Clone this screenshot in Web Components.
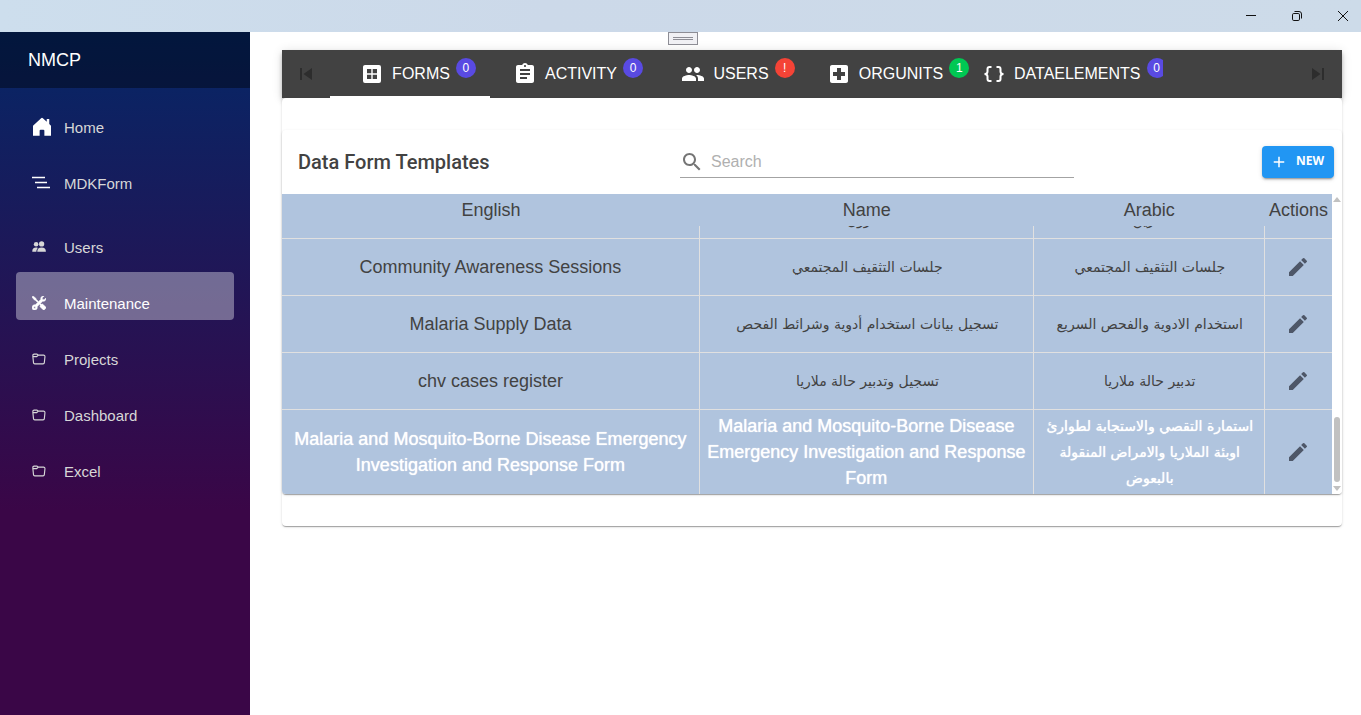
<!DOCTYPE html>
<html lang="en">
<head>
<meta charset="utf-8">
<title>NMCP</title>
<style>
html,body{margin:0;height:100%}
body{font-family:"Liberation Sans",Arial,sans-serif;background:#fff;color:#424242}
</style>
</head>
<body>
<nmcp-app></nmcp-app>
<script>
const define = (name, html, init) => customElements.define(name, class extends HTMLElement {
  connectedCallback() {
    if (this.shadowRoot) return;
    const t = document.createElement('template');
    t.innerHTML = typeof html === 'function' ? html(this) : html;
    this.attachShadow({mode: 'open'}).append(t.content.cloneNode(true));
    if (init) init(this);
  }
});

const icons = {
  home: ['0 0 16 16', '<path d="M8.700.9a1 1 0 0 0-1.400 0L.8 7v8h5.300V10.900a.8.8 0 0 1 .8-.8h2.200a.8.8 0 0 1 .8.8V15h5.300V7L13.800 5.600V1.600h-2v2.200z"/>'],
  lines: ['0 0 20 20', '<path d="M0 4.500h13M3 9.500h12M5 14.500h13" fill="none" stroke="currentColor" stroke-width="1.300"/>'],
  people: ['0 0 16 16', '<circle cx="4.700" cy="4.800" r="2.600"/><circle cx="11" cy="4.500" r="3"/><path d="M.3 13.400C.2 10.400 1.800 8.700 4.700 8.700c.8 0 1.400.1 2 .4C5.500 10.200 5 11.600 5 13.400zM6 13.400C6 10.400 7.700 8.700 11 8.700s4.900 1.700 4.900 4.700z"/>'],
  tools: ['0 0 16 16', '<path stroke="currentColor" stroke-width=".6" d="M1 0 0 1l2.200 3.081a1 1 0 0 0 .815.419h.07a1 1 0 0 1 .708.293l2.675 2.675-2.617 2.654A3.003 3.003 0 0 0 0 13a3 3 0 1 0 5.878-.851l2.654-2.617.968.968-.305.914a1 1 0 0 0 .242 1.023l3.270 3.270a.997.997 0 0 0 1.414 0l1.586-1.586a.997.997 0 0 0 0-1.414l-3.270-3.270a1 1 0 0 0-1.023-.242L10.500 9.500l-.960-.960 2.680-2.643A3.005 3.005 0 0 0 16 3q0-.405-.102-.777l-2.140 2.141L12 4l-.364-1.757L13.777.102a3 3 0 0 0-3.675 3.680L7.462 6.460 4.793 3.793a1 1 0 0 1-.293-.707v-.071a1 1 0 0 0-.419-.814zM3 12a1 1 0 1 1 0 2 1 1 0 0 1 0-2"/>'],
  folder: ['0 0 16 16', '<path d="M1 5.300V3.800A1.400 1.400 0 0 1 2.400 2.400h3.200c.8 0 1.100 1.200 2 1.200h5.600a1.600 1.600 0 0 1 1.600 1.800l-.7 6.700a1.500 1.500 0 0 1-1.500 1.400H3.200a1.500 1.500 0 0 1-1.500-1.400L1 5.300h4.300L7 3.700" fill="none" stroke="currentColor" stroke-width="1.300"/>'],
  skipprev: ['0 0 24 24', '<path d="M6 6h2v12H6zm3.500 6 8.500 6V6z"/>'],
  skipnext: ['0 0 24 24', '<path d="m6 18 8.500-6L6 6zM16 6v12h2V6z"/>'],
  forms: ['0 0 24 24', '<path fill-rule="evenodd" d="M5 3h14a2 2 0 0 1 2 2v14a2 2 0 0 1-2 2H5a2 2 0 0 1-2-2V5c0-1.100.9-2 2-2zm2 4v4.300h4.300V7zm5.700 0v4.300H17V7zM7 12.700V17h4.300v-4.300zm5.700 0V17H17v-4.300z"/>'],
  activity: ['0 0 24 24', '<path d="M19 3h-4.180C14.400 1.840 13.300 1 12 1s-2.400.840-2.820 2H5c-1.100 0-2 .9-2 2v14c0 1.100.9 2 2 2h14c1.100 0 2-.9 2-2V5c0-1.100-.9-2-2-2m-7 0c.55 0 1 .45 1 1s-.45 1-1 1-1-.45-1-1 .45-1 1-1m2 14H7v-2h7zm3-4H7v-2h10zm0-4H7V7h10z"/>'],
  group: ['0 0 24 24', '<path d="M16 11c1.660 0 2.990-1.340 2.990-3S17.660 5 16 5s-3 1.340-3 3 1.340 3 3 3m-8 0c1.660 0 2.990-1.340 2.990-3S9.660 5 8 5 5 6.340 5 8s1.340 3 3 3m0 2c-2.330 0-7 1.170-7 3.500V19h14v-2.500c0-2.330-4.670-3.500-7-3.500m8 0c-.29 0-.62.020-.97.050 1.160.840 1.970 1.970 1.970 3.450V19h6v-2.500c0-2.330-4.670-3.500-7-3.500"/>'],
  orgunits: ['0 0 24 24', '<path d="M19 3H5c-1.100 0-1.990.9-1.990 2L3 19c0 1.100.9 2 2 2h14c1.100 0 2-.9 2-2V5c0-1.100-.9-2-2-2m-1 11h-4v4h-4v-4H6v-4h4V6h4v4h4z"/>'],
  data: ['0 0 24 24', '<path d="M9.500 5H7.500Q5.500 5 5.500 7v2.500Q5.500 12 2.500 12 5.500 12 5.500 14.500V17q0 2 2 2h2M14.500 5h2q2 0 2 2v2.500q0 2.500 3 2.500-3 0-3 2.500V17q0 2-2 2h-2" fill="none" stroke="currentColor" stroke-width="2"/>'],
  search: ['0 0 24 24', '<path d="M15.500 14h-.79l-.28-.27C15.410 12.590 16 11.110 16 9.500 16 5.910 13.090 3 9.500 3S3 5.910 3 9.500 5.910 16 9.500 16c1.610 0 3.090-.59 4.230-1.570l.27.28v.79l5 4.990L20.490 19zm-6 0C7.010 14 5 11.990 5 9.500S7.010 5 9.500 5 14 7.010 14 9.500 11.990 14 9.500 14"/>'],
  add: ['0 0 24 24', '<path d="M19 13h-6v6h-2v-6H5v-2h6V5h2v6h6z"/>'],
  edit: ['0 0 24 24', '<path d="M3 17.250V21h3.750L17.810 9.940l-3.750-3.750zM20.710 7.040c.39-.39.39-1.020 0-1.410l-2.340-2.340a.996.996 0 0 0-1.410 0l-1.830 1.830 3.750 3.750z"/>'],
  minimize: ['0 0 16 16', '<path d="M3 7.500h10" stroke="currentColor"/>'],
  restore: ['0 0 16 16', '<g fill="none" stroke="currentColor"><rect x="3.500" y="5.500" width="7" height="7" rx="1.300"/><path d="M5.500 3.500H10A2.500 2.500 0 0 1 12.500 6v4.500"/></g>'],
  close: ['0 0 16 16', '<path d="m3 3 10 10M13 3 3 13" stroke="currentColor"/>']
};
define('x-icon', el => {
  const [box, body] = icons[el.getAttribute('name')];
  return `<style>:host{display:block;flex:none;width:24px;height:24px}svg{display:block;width:100%;height:100%}</style>
  <svg viewBox="${box}" fill="currentColor" aria-hidden="true">${body}</svg>`;
});

define('title-bar', `<style>
:host{display:flex;justify-content:flex-end;align-items:center;gap:30px;height:32px;padding-right:10px;box-sizing:border-box;background:linear-gradient(90deg,#cddeed,#ccd9e9 40%,#cddbe9);color:#111}
button{border:0;padding:0;background:none;color:inherit}
x-icon{width:16px;height:16px}
</style>
<button aria-label="Minimize"><x-icon name="minimize"></x-icon></button>
<button aria-label="Restore"><x-icon name="restore"></x-icon></button>
<button aria-label="Close"><x-icon name="close"></x-icon></button>`);

define('nav-item', el => `<style>
:host{display:block}
a{display:flex;align-items:center;gap:16px;height:48px;padding:16px 16px 0 14px;box-sizing:border-box;border-radius:4px;color:#d7d7d7;text-decoration:none;font-size:15px;line-height:32px}
.icon{display:flex;justify-content:flex-start;width:18px}
x-icon{width:14px;height:14px;margin:0 0 2px 2px}
:host([wide]) x-icon{width:20px;height:20px;color:#fff}
:host([active]) a{background:rgba(255,255,255,.37);color:#fff}
</style>
<a href="#"><span class="icon"><x-icon name="${el.getAttribute('icon')}"></x-icon></span><slot></slot></a>`);

define('side-bar', `<style>
:host{display:block;flex:0 0 250px;background:linear-gradient(180deg,#052767 0%,#3a0647 70%)}
header{display:flex;align-items:center;height:56px;padding-left:28px;background:rgba(0,0,0,.4);color:#fff;font-size:18px}
nav{display:flex;flex-direction:column;gap:8px;padding:8px 16px}
.second{margin-top:8px}
</style>
<header>NMCP</header>
<nav>
<nav-item icon="home" wide>Home</nav-item>
<nav-item icon="lines" wide>MDKForm</nav-item>
<nav-item icon="people" class="second">Users</nav-item>
<nav-item icon="tools" active>Maintenance</nav-item>
<nav-item icon="folder">Projects</nav-item>
<nav-item icon="folder">Dashboard</nav-item>
<nav-item icon="folder">Excel</nav-item>
</nav>`);

define('tab-item', el => `<style>
:host{display:block;flex:none}
button{position:relative;display:flex;align-items:center;justify-content:center;min-width:160px;height:48px;padding:0 22px 0 12px;border:0;background:none;color:#fff;font:16px/24px "Liberation Sans",Arial,sans-serif;overflow:hidden}
:host([active]) button{box-shadow:inset 0 -2px #fff}
x-icon{margin-right:8px}
.label{position:relative}
.badge{position:absolute;left:calc(100% + 6px);top:-4px;width:20px;height:20px;border-radius:10px;background:${el.getAttribute('color')};font-size:12px;line-height:20px;text-align:center}
</style>
<button role="tab"><x-icon name="${el.getAttribute('icon')}"></x-icon><span class="label"><slot></slot><span class="badge">${el.getAttribute('badge')}</span></span></button>`);

define('tab-bar', `<style>
:host{display:flex;height:48px;background:#424242;box-shadow:0 2px 4px -1px rgba(0,0,0,.2),0 4px 5px rgba(0,0,0,.14),0 1px 10px rgba(0,0,0,.12)}
.tabs{display:flex;flex:1;min-width:0;overflow:hidden}
.scroll{display:flex;align-items:center;justify-content:center;flex:none;width:48px;padding:0;border:0;background:none;color:#2d2d2d}
</style>
<button class="scroll" aria-label="Previous tabs" disabled><x-icon name="skipprev"></x-icon></button>
<div class="tabs" role="tablist">
<tab-item icon="forms" badge="0" color="#594ae2" active>FORMS</tab-item>
<tab-item icon="activity" badge="0" color="#594ae2">ACTIVITY</tab-item>
<tab-item icon="group" badge="!" color="#f44336">USERS</tab-item>
<tab-item icon="orgunits" badge="1" color="#00c853">ORGUNITS</tab-item>
<tab-item icon="data" badge="0" color="#594ae2">DATAELEMENTS</tab-item>
</div>
<button class="scroll" aria-label="Next tabs" disabled><x-icon name="skipnext"></x-icon></button>`);

define('form-toolbar', `<style>
:host{display:grid;grid-template-columns:382fr 394fr 260fr;align-items:center;height:64px;padding:0 8px 0 16px}
h1{margin:0;font:500 20px/32px Roboto,sans-serif}
.search{display:flex;align-items:center;height:32px;box-sizing:border-box;border-bottom:1px solid #a3a3a3;color:#757575}
input{flex:1;min-width:0;margin-left:7px;padding:0;border:0;outline:0;background:none;color:#424242;font:16px "Liberation Sans",Arial,sans-serif}
input::placeholder{color:#b0b0b0;opacity:1}
.new{justify-self:end;display:flex;align-items:center;gap:8px;height:32px;padding:0 10px 2px 8px;border:0;border-radius:4px;background:#2196f3;color:#fff;font:700 12px/30px "Open Sans",sans-serif;box-shadow:0 3px 1px -2px rgba(0,0,0,.2),0 2px 2px rgba(0,0,0,.14),0 1px 5px rgba(0,0,0,.12)}
.new x-icon{width:18px;height:18px;margin-top:2px}
</style>
<h1>Data Form Templates</h1>
<label class="search"><x-icon name="search"></x-icon><input type="text" placeholder="Search" aria-label="Search"></label>
<button class="new"><x-icon name="add"></x-icon>NEW</button>`);

const rows = [
  ['', 'مخزون', 'تمرين'],
  ['Community Awareness Sessions', 'جلسات التثقيف المجتمعي', 'جلسات التثقيف المجتمعي'],
  ['Malaria Supply Data', 'تسجيل بيانات استخدام أدوية وشرائط الفحص', 'استخدام الادوية والفحص السريع'],
  ['chv cases register', 'تسجيل وتدبير حالة ملاريا', 'تدبير حالة ملاريا'],
  ['Malaria and Mosquito-Borne Disease Emergency Investigation and Response Form', 'Malaria and Mosquito-Borne Disease Emergency Investigation and Response Form', 'استمارة التقصي والاستجابة لطوارئ اوبئة الملاريا والامراض المنقولة بالبعوض']
];
const cell = t => /[\u0600-\u06ff]/.test(t) ? `<td lang="ar" dir="rtl">${t}</td>` : `<td>${t}</td>`;
define('form-table', `<style>
:host{display:flex;height:300px;border-radius:0 0 4px 4px;overflow:hidden}
.view{flex:1;min-width:0;overflow-y:auto;scrollbar-width:none;background:#b0c4de}
table{width:100%;table-layout:fixed;border-collapse:separate;border-spacing:0;font-size:18px;line-height:26px;text-align:center}
.c1{width:39.8%}.c2{width:31.8%}.c3{width:22%}
th{position:sticky;top:0;height:32px;padding:0;background:#b0c4de;font-weight:400;box-sizing:border-box;z-index:1}
td{height:57px;box-sizing:border-box;padding:3px 7px;border-top:1px solid #e0e0e0;border-right:1px solid #e0e0e0}
td:last-child{border-right:0;padding:3px 0}
td[lang=ar]{font-family:"DejaVu Sans",sans-serif;font-size:14px}
tbody tr:first-child td[lang=ar]{vertical-align:bottom;padding-bottom:5px}
tr.selected td{color:#fff;text-shadow:0 0 1px #fff}
td button{display:block;margin:0 auto;padding:0;border:0;background:none;color:#4e5768}
.bar{display:flex;flex-direction:column;align-items:center;width:10px;background:#fff}
.up,.down{width:0;border:4px solid transparent}
.up{border-top:0;border-bottom:5px solid #c1c1c1;margin-top:3px}
.down{border-bottom:0;border-top:5px solid #c1c1c1;margin:4px 0 3px}
.thumb{width:6px;height:65px;margin-top:auto;border-radius:3px;background:#c1c1c1}
</style>
<div class="view"><table>
<colgroup><col class="c1"><col class="c2"><col class="c3"><col></colgroup>
<thead><tr><th>English</th><th>Name</th><th>Arabic</th><th>Actions</th></tr></thead>
<tbody>${rows.map((r, i) => `<tr${i === 4 ? ' class="selected"' : ''}>${r.map(cell).join('')}<td><button aria-label="Edit"><x-icon name="edit"></x-icon></button></td></tr>`).join('')}</tbody>
</table></div>
<div class="bar"><i class="up"></i><i class="thumb"></i><i class="down"></i></div>`,
el => { const v = el.shadowRoot.querySelector('.view'); v.scrollTop = v.scrollHeight; });

define('tab-panel', `<style>
:host{display:block;padding:32px 0;border-radius:4px;background:#fff;box-shadow:0 2px 1px -1px rgba(0,0,0,.2),0 1px 1px rgba(0,0,0,.14),0 1px 3px rgba(0,0,0,.12)}
section{border-radius:4px;background:#fff;box-shadow:0 2px 1px -1px rgba(0,0,0,.2),0 1px 1px rgba(0,0,0,.14),0 1px 3px rgba(0,0,0,.12)}
</style>
<section><form-toolbar></form-toolbar><form-table></form-table></section>`);

define('nmcp-app', `<style>
:host{display:flex;flex-direction:column;min-height:100vh}
.body{position:relative;display:flex;flex:1}
main{flex:1;min-width:0;padding:18px 19px 18px 32px}
.handle{position:absolute;top:0;left:calc(50% - 13px);width:30px;height:13px;box-sizing:border-box;padding:4px;border:1px solid #8d8d95;background:#f0f0f4}
.handle i{display:block;height:3px;box-sizing:border-box;border:1px solid #8d8d95;border-width:1px 0}
</style>
<title-bar></title-bar>
<div class="body"><side-bar></side-bar>
<main><tab-bar></tab-bar><tab-panel></tab-panel></main>
<div class="handle"><i></i></div></div>`);
</script>
</body>
</html>
